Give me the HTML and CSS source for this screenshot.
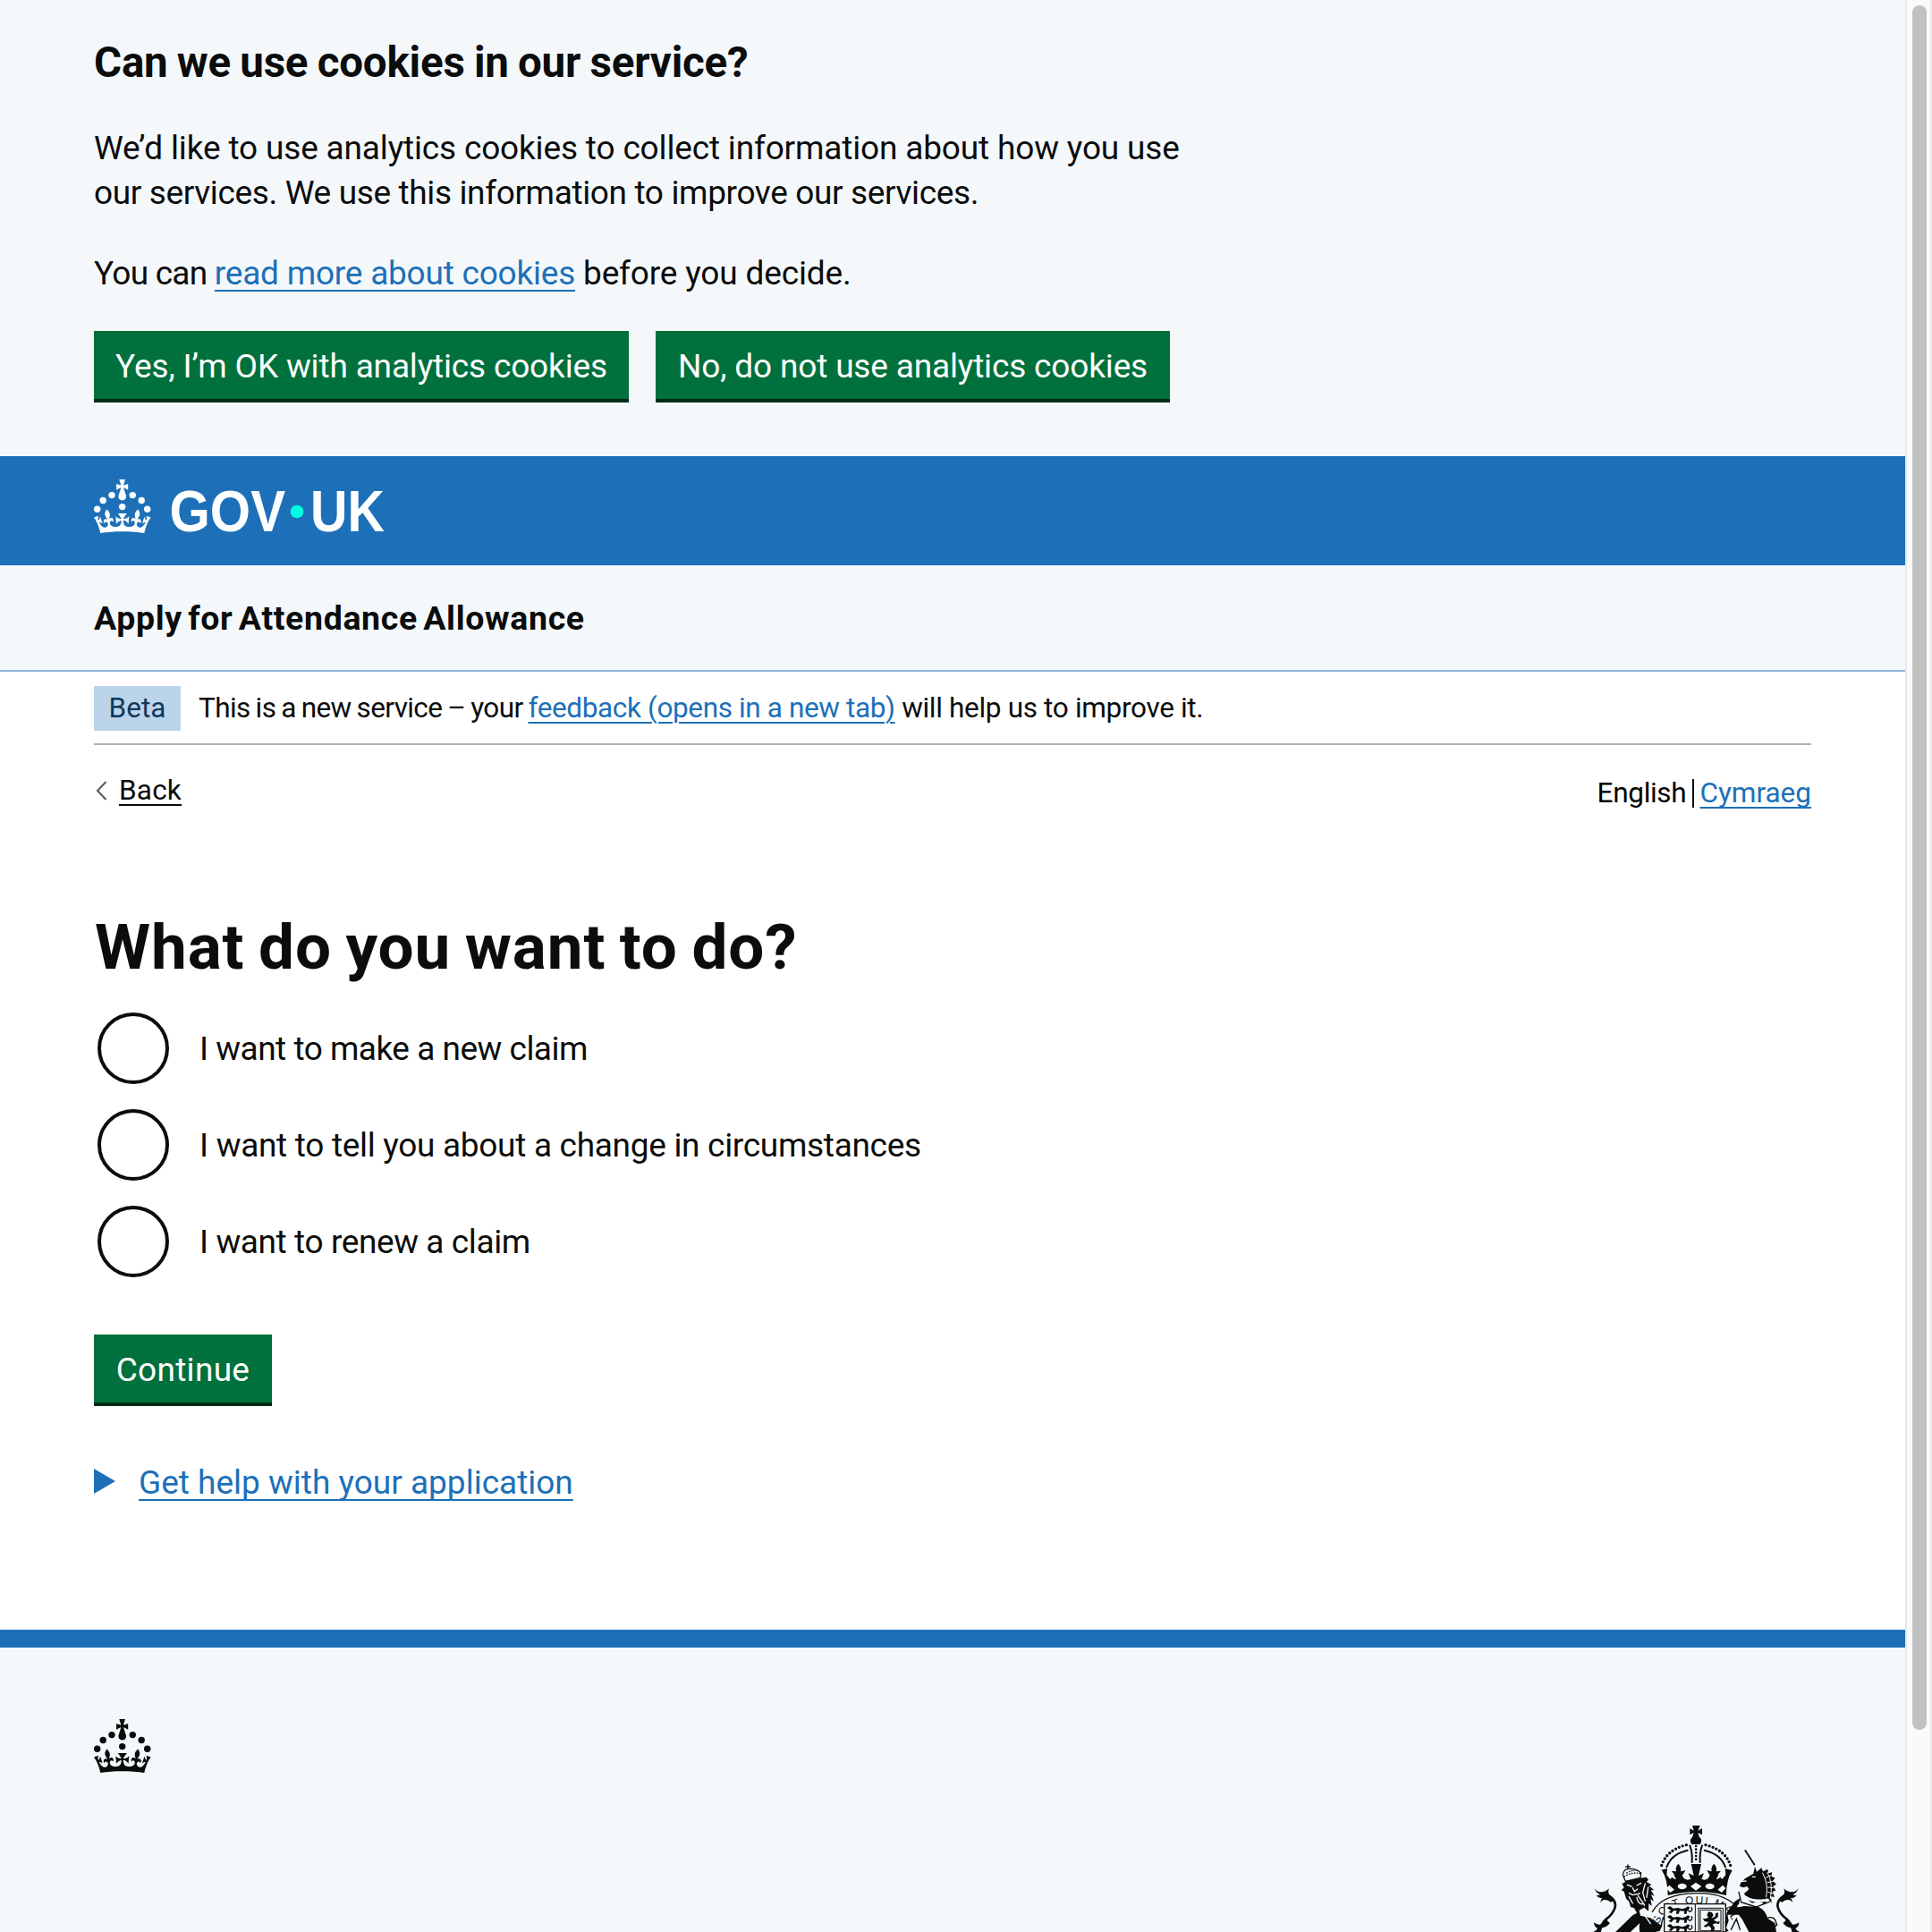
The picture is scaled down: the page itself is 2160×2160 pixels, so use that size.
FILE: index.html
```
<!DOCTYPE html>
<html lang="en">
<head>
<meta charset="utf-8">
<title>What do you want to do? - Apply for Attendance Allowance - GOV.UK</title>
<link rel="stylesheet" href="styles.css">
</head>
<body>
<svg class="defs" aria-hidden="true">
  <symbol id="crown" viewBox="0 0 64 60">
    <circle cx="20" cy="17.6" r="3.7"/><circle cx="10.2" cy="23.5" r="3.7"/><circle cx="3.7" cy="33.2" r="3.7"/>
    <circle cx="31.7" cy="30.6" r="3.7"/><circle cx="43.3" cy="17.6" r="3.7"/><circle cx="53.2" cy="23.5" r="3.7"/><circle cx="59.7" cy="33.2" r="3.7"/>
    <path d="M33.1,9.8c.2-.1.3-.3.5-.5l4.6,2.4v-6.8l-4.6,1.5c-.1-.2-.3-.3-.5-.5l1.9-5.9h-6.7l1.9,5.9c-.2.1-.3.3-.5.5l-4.6-1.5v6.8l4.6-2.4c.1.2.3.3.5.5l-2.6,8c-.9,2.8,1.2,5.7,4.1,5.7h0c3,0,5.1-2.9,4.1-5.7l-2.6-8ZM37,37.9s-3.4,3.8-4.1,6.1c2.2,0,4.2-.5,6.4-2.8l-.7,8.5c-2-2.8-4.4-4.1-5.7-3.8.1,3.1.5,6.7,5.8,7.2,3.7.3,6.7-1.5,7-3.8.4-2.6-2-4.3-3.7-1.6-1.4-4.5,2.4-6.1,4.9-3.2-1.9-4.5-1.8-7.7,2.4-10.9,3,4,2.6,7.3-1.2,11.1,2.4-1.3,6.2,0,4,4.6-1.2-2.8-3.7-2.2-4.2.2-.3,1.7.7,3.7,3,4.2,1.9.3,4.7-.9,7-5.9-1.3,0-2.4.7-3.9,1.7l2.4-8c.6,2.3,1.4,3.7,2.2,4.5.6-1.6.5-2.8,0-5.3l5,1.8c-2.6,3.6-5.2,8.7-7.3,17.5-7.4-1.1-15.7-1.7-24.5-1.7h0c-8.8,0-17.1.6-24.5,1.7-2.1-8.9-4.7-13.9-7.3-17.5l5-1.8c-.5,2.5-.6,3.7,0,5.3.8-.8,1.6-2.3,2.2-4.5l2.4,8c-1.5-1-2.6-1.7-3.9-1.7,2.3,5,5.2,6.2,7,5.9,2.3-.4,3.3-2.4,3-4.2-.5-2.4-3-3.1-4.2-.2-2.2-4.6,1.6-6,4-4.6-3.7-3.7-4.2-7.1-1.2-11.1,4.2,3.2,4.3,6.4,2.4,10.9,2.5-2.8,6.3-1.3,4.9,3.2-1.8-2.7-4.1-1-3.7,1.6.3,2.3,3.3,4.1,7,3.8,5.4-.5,5.7-4.2,5.8-7.2-1.3-.2-3.7,1-5.7,3.8l-.7-8.5c2.2,2.3,4.2,2.7,6.4,2.8-.7-2.3-4.1-6.1-4.1-6.1h10.6,0Z"/>
  </symbol>
</svg>
<div class="window">
<div class="page">
  <section class="cookie-banner">
    <h2 class="cookie-banner__title">Can we use cookies in our service?</h2>
    <p class="body"><span class="line-a">We’d like to use analytics cookies to collect information about how you use</span><br><span class="line-b">our services. We use this information to improve our services.</span></p>
    <p class="body"><span class="line-c">You can </span><a class="link link--cookies" href="#">read more about cookies</a> <span>before you decide.</span></p>
    <div class="button-group">
      <button class="button button--yes">Yes, I’m OK with analytics cookies</button>
      <button class="button button--no">No, do not use analytics cookies</button>
    </div>
  </section>

  <header class="header">
    <svg class="logo" viewBox="0 0 326 60" role="img" aria-label="GOV.UK">
      <use href="#crown" width="64" height="60" fill="#fff"/>
      <g class="logo__text">
        <text x="84.5" y="58" textLength="129.5" lengthAdjust="spacingAndGlyphs">GOV</text>
        <text x="242" y="58" textLength="83" lengthAdjust="spacingAndGlyphs">UK</text>
      </g>
      <circle cx="227" cy="36" r="7.3" fill="#00ffe0"/>
    </svg>
  </header>
  <div class="service-nav"><span class="service-nav__name">Apply for Attendance Allowance</span></div>

  <div class="container">
    <div class="phase-banner">
      <strong class="tag">Beta</strong>
      <span class="phase-banner__text"><span class="phase-a">This is a new service – your </span><a class="link link--phase" href="#">feedback (opens in a new tab)</a><span class="phase-b"> will help us to improve it.</span></span>
    </div>
    <div class="top-row">
      <a class="back" href="#"><svg class="back__arrow" viewBox="0 0 13 22"><path d="M11.500 1 2 11l9.500 10" fill="none" stroke="#505a5f" stroke-width="2"/></svg><span class="back__text">Back</span></a>
      <div class="language"><span class="language__current">English</span><span class="language__divider"></span><a class="link link--lang" href="#">Cymraeg</a></div>
    </div>
    <main>
      <h1 class="heading">What do you want to do?</h1>
      <div class="radios">
        <label class="radio"><span class="radio__dot"></span><span class="radio__text radio-a">I want to make a new claim</span></label>
        <label class="radio"><span class="radio__dot"></span><span class="radio__text radio-b">I want to tell you about a change in circumstances</span></label>
        <label class="radio"><span class="radio__dot"></span><span class="radio__text radio-c">I want to renew a claim</span></label>
      </div>
      <button class="button button--continue">Continue</button>
      <div class="details"><svg class="details__arrow" viewBox="0 0 24 28"><path d="M0 0 24 14 0 28z" fill="#1d70b8"/></svg><a class="link link--details" href="#">Get help with your application</a></div>
    </main>
  </div>

  <footer class="footer">
    <svg class="footer__crown" viewBox="0 0 64 60"><use href="#crown" width="64" height="60" fill="#0b0c0c"/></svg>
    <svg class="footer__crest" viewBox="0 0 810 420" fill="#0b0c0c" stroke-linecap="round">
      <!-- orb and cross -->
      <path d="M396 63h26l-7 17 14-8v22l-14-7 5 15q8 5 6 16l-4 8h-28l-4-8q-2-11 6-16l5-15-13 7V72l13 8z"/>
      <!-- arches -->
      <g fill="none" stroke="#0b0c0c">
        <path d="M376 128Q308 145 292 200M441 128q68 17 84 72" stroke-width="10" stroke-dasharray="0 12.500"/>
        <path d="M380 146q-54 12-70 56M437 146q54 12 70 56" stroke-width="6"/>
        <path d="M388 130q9 24 7 56M429 130q-9 24-7 56" stroke-width="6"/>
        <path d="M408.500 132v54" stroke-width="8" stroke-dasharray="0 11"/>
      </g>
      <!-- circlet with fleurs-de-lis and crosses -->
      <path d="M288 213l24-6-2 22 12 14 14-16-10-12 16 2q-4-14 7-26 12 12 8 26l16-4-8 14 14 18 12-2-8-20 18 8-9-39h34l-9 39 18-8-8 20 12 2 14-18-8-14 16 4q-4-14 8-26 11 12 7 26l16-2-10 12 14 16 12-14-2-22 24 6q-20 32-20 84-98-24-196 0 0-52-20-84z"/>
      <g fill="#f4f8fb">
        <path d="M390 267l18-13 19 13-19 14zM309 273l10-10 17 15-14 10zM508 273l-10-10-17 15 14 10z"/>
        <ellipse cx="362" cy="267" rx="15" ry="10"/><ellipse cx="455" cy="267" rx="15" ry="10"/>
        <path d="M322 226q8 18 20 17l-8-14zM496 226q-8 18-20 17l8-14zM362 227q4 18 18 17l-8-18zM455 227q-4 18-18 17l8-18z"/>
      </g>
      <!-- garter and motto -->
      <path d="M262 352q34-60 146-62t148 62M292 400q4-52 60-70" fill="none" stroke="#0b0c0c" stroke-width="4"/>
      <path id="motto" d="M284 398Q300 326 408 325t128 73" fill="none"/>
      <text class="crest-motto"><textPath href="#motto" startOffset="3">SOIT QUI MAL</textPath></text>
      <!-- quartered shield -->
      <path d="M302 326h206v94H302z" fill="#f4f8fb" stroke="#0b0c0c" stroke-width="4"/>
      <path d="M406 326v94M417 340h82v80M417 340v80M424 346h68v70h-68z" fill="none" stroke="#0b0c0c" stroke-width="3"/>
      <g id="passant"><path d="M312 338l10-5 10 8 16-2 14 4 12-4 7-5 8 5-6 5 5 7-10-2-1 10h-9l2-9-16-1-4 10h-9l3-10-10-1-8 9-10-3 9-7-9-4z"/><path d="M386 352q12-2 8-14" fill="none" stroke="#0b0c0c" stroke-width="4"/></g>
      <use href="#passant" y="30"/><use href="#passant" y="60"/>
      <path d="M446 348l12 2 5 10-7 10 13-6 1-10 9-3-1 15-14 10 12 6 8-3-2 10-14-2-8 4 8 11-4 10-12 2 4-10-9-9-10 5-8-4 8-4 10-9-14-3-6-10 9 2 10-5-5-7z" transform="translate(4 4)"/>
      <!-- crowned lion -->
      <g fill="none" stroke="#0b0c0c" stroke-width="4">
        <path d="M180 195v14M173 201h14M163 230q3-22 18-21 26-4 42 13M164 232l8 18 50-12 2-16"/>
        <path d="M168 234q30-18 54-9M176 222q20-12 40-7" stroke-dasharray="2 7"/>
      </g>
      <path d="M166 256l10-8 46-9 20-3 7 9-7 7 18 10-9 3 17 15-11-1 12 20-11-5 9 23-11-7 4 23-10-9-1 26-14-12-17 9 4 18 33 8 40 27-9 18h-10l10 12H222q-6-20-2-40l-42 40h-50l68-66 14-8-9-16-12-4-5-18-10-10-7-24-9-4 9-9-7-14 7-2z"/>
      <g fill="none" stroke="#f4f8fb" stroke-width="4">
        <path d="M178 262l14 5M210 264l14-8M196 272l6 12 10-8M184 290l12 6 24-5M210 304q4 24 20 22M214 298l22 32M238 258l-8 30 8 28M248 270l-5 34M184 302l12 22M230 356l26 36M242 352l32 30"/>
      </g>
      <g id="tail">
        <path d="M68 273q8 13 22 13 15 0 27-12-6 12 2 24 10 6 16 16l-12 6q-10-10-24-8-8 3-11 10 0-11 6-16-14 0-20-10 10 2 12-2-14-6-18-21z"/>
        <path d="M116 298q28 18 20 42-8 22-28 36-18 16-22 42" fill="none" stroke="#0b0c0c" stroke-width="8"/>
        <path d="M66 388q12 10 26 6l16-22q2 12 12 18-12 14-26 16l-8 14H64q12-6 14-12-12-6-12-20z"/>
      </g>
      <use href="#tail" transform="matrix(-1 0 0 1 820 0)"/>
      <!-- unicorn -->
      <path d="M574 147L605 195" fill="none" stroke="#0b0c0c" stroke-width="6" stroke-dasharray="5 5"/>
      <path d="M606 200l6 18 16-13 5 12 16-8 2 14 13-3-3 13 13 6-8 9 12 12-11 6 9 14-11 6 7 17-12-2 2 22-13-14-10 18-20-12-22 8-23-18-4-14 16-14-6-10-12 4-13-4 3-11 15-15 28-17z"/>
      <g fill="none" stroke="#f4f8fb">
        <path d="M598 235h9M562 250l14-1" stroke-width="4"/>
        <path d="M632 222q20 36 12 80M648 220q20 36 10 88M642 238l18-8M648 254l19-4M650 270l18 2M650 286l15 5" stroke-width="3"/>
        <path d="M558 288q28 36 92 24" stroke-width="9" stroke-dasharray="8 5"/>
      </g>
      <path d="M552 286l8 34 50 16 44-17" fill="none" stroke="#0b0c0c" stroke-width="4"/>
      <path d="M538 318l18-12-3 18-10 14 28-5 48 3q25 14 29 38l25 16 5 30h-92l-22-41-12-17h-38l4 20-8 24 8 10-10 4-2-34 6-32z"/>
      <path d="M526 412l18-36 12 36M650 372q18-4 24 8l6 16-14 12" fill="none" stroke="#0b0c0c" stroke-width="4"/>
    </svg>
  </footer>
</div>
<div class="scrollbar"><div class="scrollbar__thumb"></div></div>
</div>
</body>
</html>
```
FILE: styles.css
```
* { box-sizing: border-box; }
html, body { margin: 0; height: 2160px; overflow: hidden; }
body { background: #fff; color: #0b0c0c; font-family: Roboto, "Liberation Sans", sans-serif; font-size: 37px; line-height: 50px; white-space: nowrap; }
h1, h2, p { margin: 0; }
.defs { display: none; }
.window { display: flex; height: 2160px; }
.page { width: 2130px; height: 2160px; overflow: hidden; display: flex; flex-direction: column; }

.link { color: #1d70b8; text-decoration: underline; text-decoration-thickness: 2px; text-underline-offset: 6px; }

/* Cookie banner */
.cookie-banner { background: #f4f8fb; height: 510px; padding: 40px 105px 0; }
.cookie-banner__title { font-size: 47.5px; line-height: 60px; letter-spacing: -.2px; word-spacing: -1.3px; margin-bottom: 41px; }
.body { margin-bottom: 40px; letter-spacing: -.16px; }
.line-b { letter-spacing: -.36px; }
.line-c { letter-spacing: -.75px; }
.link--cookies { letter-spacing: -.22px; text-decoration-skip-ink: none; }
.button-group { display: flex; gap: 30px; margin-top: -1px; }
.button { display: block; border: 0; margin: 0; height: 80px; padding: 3px 0 4px; background: #00703c; box-shadow: inset 0 -4px 0 #002d18; color: #fff; font: inherit; text-align: center; }
.button--yes { width: 598px; letter-spacing: -.16px; }
.button--no { width: 575px; letter-spacing: -.16px; }
.button--continue { width: 199px; letter-spacing: .3px; }

/* Header */
.header { background: #1d70b8; height: 122px; padding: 26px 105px; flex: none; }
.logo { display: block; width: 326px; height: 60px; overflow: visible; }
.logo__text { font: bold 64px "Liberation Sans", Arial, sans-serif; fill: #fff; }
.service-nav { background: #f4f8fb; height: 119px; border-bottom: 2px solid #8eb8dc; padding: 1px 105px 0; display: flex; align-items: center; flex: none; }
.service-nav__name { font-size: 37.5px; font-weight: 700; letter-spacing: .65px; word-spacing: -3.6px; }

.container { width: 1920px; margin-left: 105px; height: 1071px; flex: none; }
.phase-banner { display: flex; gap: 20px; height: 82px; padding: 16px 0 14px; border-bottom: 2px solid #b1b4b6; font-size: 31.5px; }
.tag { width: 97px; background: #bbd4ea; color: #0f385c; font-weight: 400; text-align: center; }
.phase-banner__text { white-space: pre; }
.phase-a { letter-spacing: -.6px; word-spacing: -1.3px; }
.phase-b { letter-spacing: -.32px; }
.link--phase { letter-spacing: -.37px; text-underline-offset: 5px; }

.top-row { display: flex; justify-content: space-between; padding-top: 31px; height: 186px; font-size: 31.5px; line-height: 40px; }
.back { display: flex; height: 40px; align-items: center; color: #0b0c0c; text-decoration: none; padding-left: 2px; }
.back__arrow { width: 13px; height: 22px; margin: 0 13px 1px 0; }
.back__text { letter-spacing: .2px; text-decoration: underline; text-decoration-thickness: 2px; text-underline-offset: 5px; }
.language { display: flex; align-items: flex-start; padding-top: 3px; color: #000; }
.language__current { letter-spacing: -.3px; }
.language__divider { width: 2px; height: 32px; margin: 4px 6px 0 7px; background: #0b0c0c; }
.link--lang { text-underline-offset: 5px; text-decoration-skip-ink: none; }

.heading { font-size: 71px; line-height: 80px; letter-spacing: .9px; word-spacing: -3px; margin: 0 0 33px 1px; }
.radios { display: flex; flex-direction: column; gap: 28px; margin-bottom: 64px; padding-left: 4px; }
.radio { display: flex; align-items: center; height: 80px; gap: 34px; }
.radio__dot { width: 80px; height: 80px; border: 4px solid #0b0c0c; border-radius: 50%; }
.radio__text { padding-top: 2px; }
.radio-a { letter-spacing: -.5px; }
.radio-b { letter-spacing: -.3px; }
.radio-c { letter-spacing: -.4px; }
.details { display: flex; align-items: center; margin-top: 60px; height: 50px; }
.details__arrow { width: 24px; height: 28px; margin: 0 26px 2px 0; }
.link--details { padding-top: 2px; text-decoration-skip-ink: none; }

/* Footer */
.footer { flex: 1; background: #f4f8fb; border-top: 20px solid #1d70b8; padding: 80px 100px 0 105px; display: flex; justify-content: space-between; align-items: flex-start; }
.footer__crown { width: 64px; height: 60px; }
.footer__crest { width: 270px; height: 140px; margin-top: 98px; flex: none; }
.crest-motto { font: 36px "Liberation Sans", Arial, sans-serif; letter-spacing: 5px; }

/* Window scrollbar */
.scrollbar { width: 30px; background: #fafafa; border-left: 2px solid #e8e8e8; border-right: 2px solid #ececec; padding: 6px 4px 0 6px; }
.scrollbar__thumb { width: 16px; height: 1928px; border-radius: 8px; background: #c1c1c1; }
```
